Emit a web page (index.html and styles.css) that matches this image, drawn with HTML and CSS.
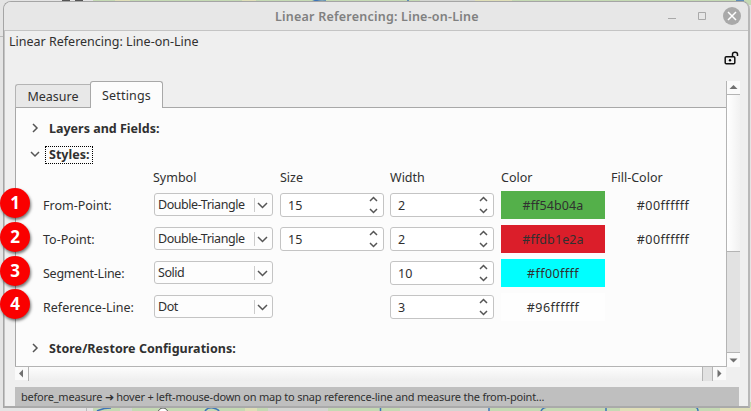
FILE: index.html
```html
<!DOCTYPE html>
<html lang="en">
<head>
<meta charset="utf-8">
<title>Linear Referencing: Line-on-Line</title>
<link rel="stylesheet" href="styles.css">
</head>
<body>
<svg class="map" width="751" height="411" viewBox="0 0 751 411">
  <path fill="#e4e4e4" d="M0 0h751v411H0z"/>
  <path fill="#bbb" d="M0 36h5v1H0zM86 402h1v9h-1z"/>
  <path fill="#555" d="M62 0h8v1h-8zM75 0h8v1h-8zM270 0h4v2h-4zM280 0h4v2h-4zM672 0h4v1h-4zM680 0h12v1h-12z"/>
  <path fill="#c5dab4" d="M93 0h658v5H93zM93 402h658v9H93z"/>
  <path fill="#e0dfb8" d="M115 0h15v3h-15zM242 0h14v3h-14zM472 0h40v3h-40zM245 407h12v4h-12zM620 407h40v4h-40zM720 407h31v4h-31z"/>
  <path fill="#d4d5d2" d="M120 407h12v4h-12zM268 407h60v4h-60zM400 407h90v4h-90zM420 0h55v2h-55z"/>
  <path fill="none" stroke="#3d74b8" stroke-width="1.5" d="M97 411q6-3 14-3M205 411q3-4 8-3t6 3M380.500 402v9M489 402v9M541 411q2-4 8-4M606 411v-4M694 407q4 0 4 4M310 3q6-4 16-3M408 0v3M736 1h8"/>
  <circle cx="163" cy="413" r="5" fill="#fff" stroke="#555"/>
</svg>
<main class="window">
  <header class="titlebar">
    <h1 class="title">Linear Referencing: Line-on-Line</h1>
    <svg class="controls" width="74" height="20" viewBox="0 0 74 20">
      <path stroke="#a9a9a9" d="M0 12.500h8"/>
      <path fill="none" stroke="#a9a9a9" d="M30.500 6.500h7v7h-7z"/>
      <circle cx="64" cy="10" r="9" fill="#a9a9a9"/>
      <path stroke="#fff" stroke-width="1.500" d="M60 6l8 8M68 6l-8 8"/>
    </svg>
  </header>
  <div class="body">
    <div class="dock-title">Linear Referencing: Line-on-Line</div>
    <div class="lock-row">
      <svg width="15" height="15" viewBox="0 0 15 15"><path fill="none" stroke="#111" stroke-width="1.500" d="M2.200 5.700h7.600q1 0 1 1v5q0 1-1 1H2.200q-1 0-1-1v-5q0-1 1-1zM8.500 5.500V3.200q0-2 2.500-2t2.500 2V5"/><circle cx="6" cy="9.200" r="1.200"/></svg>
    </div>
    <div class="scroll-area">
      <div class="view">
        <nav class="tabs"><div class="tab">Measure</div><div class="tab active">Settings</div></nav>
        <section class="panel">
          <div class="group g1"><svg class="arrow" viewBox="0 0 10 10"><path d="M3 1l4 4-4 4"/></svg><span>Layers and Fields:</span></div>
          <div class="group g2"><svg class="arrow" viewBox="0 0 10 10"><path d="M1 3l4 4 4-4"/></svg><span class="focus">Styles:</span></div>
          <div class="grid head"><span></span><span>Symbol</span><span>Size</span><span>Width</span><span>Color</span><span>Fill-Color</span></div>
          <div class="grid"><label>From-Point:</label>
            <div class="combo"><span>Double-Triangle</span><svg viewBox="0 0 18 20"><path class="sep" d="M.5 3v14"/><path d="M4 8l4.500 4.500L13 8"/></svg></div>
            <div class="spin"><span>15</span><svg viewBox="0 0 18 24"><path d="M5 8l3.500-3.500L12 8M5 16l3.500 3.500L12 16"/></svg></div>
            <div class="spin"><span>2</span><svg viewBox="0 0 18 24"><path d="M5 8l3.500-3.500L12 8M5 16l3.500 3.500L12 16"/></svg></div>
            <div class="swatch green">#ff54b04a</div><div class="swatch fill">#00ffffff</div></div>
          <div class="grid"><label>To-Point:</label>
            <div class="combo"><span>Double-Triangle</span><svg viewBox="0 0 18 20"><path class="sep" d="M.5 3v14"/><path d="M4 8l4.500 4.500L13 8"/></svg></div>
            <div class="spin"><span>15</span><svg viewBox="0 0 18 24"><path d="M5 8l3.500-3.500L12 8M5 16l3.500 3.500L12 16"/></svg></div>
            <div class="spin"><span>2</span><svg viewBox="0 0 18 24"><path d="M5 8l3.500-3.500L12 8M5 16l3.500 3.500L12 16"/></svg></div>
            <div class="swatch red">#ffdb1e2a</div><div class="swatch fill">#00ffffff</div></div>
          <div class="grid"><label class="tight">Segment-Line:</label>
            <div class="combo"><span>Solid</span><svg viewBox="0 0 18 20"><path class="sep" d="M.5 3v14"/><path d="M4 8l4.500 4.500L13 8"/></svg></div>
            <i></i>
            <div class="spin"><span>10</span><svg viewBox="0 0 18 24"><path d="M5 8l3.500-3.500L12 8M5 16l3.500 3.500L12 16"/></svg></div>
            <div class="swatch cyan">#ff00ffff</div></div>
          <div class="grid"><label>Reference-Line:</label>
            <div class="combo"><span>Dot</span><svg viewBox="0 0 18 20"><path class="sep" d="M.5 3v14"/><path d="M4 8l4.500 4.500L13 8"/></svg></div>
            <i></i>
            <div class="spin"><span>3</span><svg viewBox="0 0 18 24"><path d="M5 8l3.500-3.500L12 8M5 16l3.500 3.500L12 16"/></svg></div>
            <div class="swatch white">#96ffffff</div></div>
          <div class="group g3"><svg class="arrow" viewBox="0 0 10 10"><path d="M3 1l4 4-4 4"/></svg><span>Store/Restore Configurations:</span></div>
        </section>
      </div>
      <div class="vbar">
        <svg class="step" viewBox="0 0 13 13"><path d="M2.500 8h8L6.500 4z"/></svg>
        <div class="thumb"></div><div class="trough"></div>
        <svg class="step" viewBox="0 0 13 13"><path d="M2.500 5h8L6.500 9z"/></svg>
      </div>
      <div class="hbar">
        <svg class="step" viewBox="0 0 13 13"><path d="M8 2.500v8L4 6.500z"/></svg>
        <div class="thumb"></div><div class="trough"></div>
        <svg class="step" viewBox="0 0 13 13"><path d="M4.500 2.500v8L8.500 6.500z"/></svg>
      </div>
    </div>
    <footer class="status">before_measure ➜ hover + left-mouse-down on map to snap reference-line and measure the from-point...</footer>
  </div>
</main>
<div class="badge b1">1</div><div class="badge b2">2</div><div class="badge b3">3</div><div class="badge b4">4</div>
</body>
</html>
```
FILE: styles.css
```css
* { box-sizing: border-box; }
body { margin: 0; width: 751px; height: 411px; overflow: hidden; position: relative; padding: 1px 1px 3px 3px; font: 12.5px/18px "Noto Sans", sans-serif; color: #303030; }
.map { position: absolute; left: 0; top: 0; z-index: -1; }
.window { height: 407px; border: 1px solid #a5a5a5; border-right: 2px solid #b8b8b8; border-bottom: 2px solid #aaa; border-radius: 8px 8px 0 0; background: #efefef; overflow: hidden; }
.titlebar { height: 29px; background: #e7e7e7; border-bottom: 1px solid #c4c4c4; display: flex; align-items: center; justify-content: flex-end; }
.title { margin: 2px 189px 0 0; width: 204px; font-size: 12.5px; font-weight: 600; letter-spacing: .22px; color: #808080; white-space: nowrap; }
.controls { margin-right: 6px; flex: none; }
.body { height: 375px; padding: 2px 9px 0 11px; border-left: 1px solid #c4c4c4; }
.dock-title { height: 18px; margin-left: -7px; white-space: nowrap; }
.lock-row { height: 30px; display: flex; justify-content: flex-end; }
.scroll-area { display: grid; grid-template-columns: 711px 14px; grid-template-rows: 286px 14px; margin-left: -1px; }
.view { min-width: 0; display: flex; flex-direction: column; border-bottom: 1px solid #b4b4b4; }
.tabs { height: 27px; display: flex; align-items: flex-end; margin-bottom: -1px; z-index: 1; }
.tab { height: 24px; width: 75px; padding-top: 3px; text-align: center; border: 1px solid #b4b4b4; border-bottom-color: #a8a8a8; border-right: 0; background: #e8e8e8; border-radius: 3px 0 0; }
.tab.active { height: 27px; width: 73px; padding-top: 5px; letter-spacing: .15px; border: 1px solid #a8a8a8; border-bottom: 0; background: #fcfcfc; border-radius: 3px 3px 0 0; }
.panel { flex: 1; border: 1px solid #a8a8a8; border-width: 1px 0 0 1px; background: #fcfcfc; padding: 11px 0 0 14px; }
.group { display: flex; align-items: center; height: 20px; gap: 9px; font-weight: 700; }
.arrow { width: 10px; height: 10px; margin-top: -2px; fill: none; stroke: #555; stroke-width: 1.5; }
.g2 { margin-top: 6px; }
.g2 .focus { border: 1px dotted #000; height: 18px; line-height: 16px; padding: 0 3px; margin: -1px 0 0 -4px; }
.g3 { margin-top: 14px; letter-spacing: .04px; }
.grid { display: grid; grid-template-columns: 104px 119px 103px 104px 103px 104px; column-gap: 7px; height: 34px; align-items: center; margin-left: 13px; white-space: nowrap; }
.head { height: 24px; padding-top: 2px; }
.head span:nth-child(2) { margin-left: -1px; }
.tight { letter-spacing: -.25px; }
.combo, .spin { border: 1px solid #c4c4c4; border-radius: 3px; background: #fdfdfd; display: flex; justify-content: space-between; align-items: center; }
.combo { height: 23px; padding-left: 3px; margin-top: -3px; letter-spacing: -.45px; }
.combo svg { width: 18px; height: 20px; }
.spin { width: 104px; height: 24px; margin-top: -2px; padding-left: 7px; background: #fff; }
.spin span { padding-top: 1px; }
.spin svg { width: 18px; height: 24px; }
.combo path, .spin path { fill: none; stroke: #555; stroke-width: 1.5; }
.combo .sep { stroke: #ccc; stroke-width: 1; }
.swatch { width: 104px; height: 28px; margin-top: -2px; line-height: 29px; text-align: center; letter-spacing: .1px; }
.fill { letter-spacing: .5px; }
.green { background: #54b04a; } .red { background: #db1e2a; }
.cyan { background: #0ff; letter-spacing: .4px; } .white { background: #fefefe; letter-spacing: .5px; }
.vbar { display: flex; flex-direction: column; border-left: 1px solid #b4b4b4; }
.hbar { display: flex; width: 711px; }
.step { width: 13px; height: 13px; fill: #707070; flex: none; background: #fafafa; }
.vbar .thumb { height: 158px; border: 1px solid #b4b4b4; border-width: 1px 0; background: linear-gradient(90deg,#fff,#f1f1f1); }
.vbar .trough { flex: 1; background: #e2e2e2; border-bottom: 1px solid #b4b4b4; }
.vbar .step:last-child { height: 14px; }
.hbar .thumb { width: 675px; border: 1px solid #b4b4b4; border-width: 0 1px; background: linear-gradient(#fdfdfd,#eee); }
.hbar .trough { flex: 1; background: #e2e2e2; border-right: 1px solid #b4b4b4; }
.status { height: 19px; margin: 6px 0 0 -1px; padding-left: 6px; background: #bfbfbf; font-size: 11px; letter-spacing: -.21px; line-height: 20px; white-space: nowrap; }
.badge { position: absolute; left: 0; width: 30px; height: 30px; border-radius: 50%; background: #fa0000; color: #fff; font: 700 17px/29px "Noto Sans", sans-serif; text-align: center; box-shadow: 1px 2px 3px #0008; }
.b1 { top: 188px; } .b2 { top: 222px; } .b3 { top: 256px; } .b4 { top: 289px; }
```
